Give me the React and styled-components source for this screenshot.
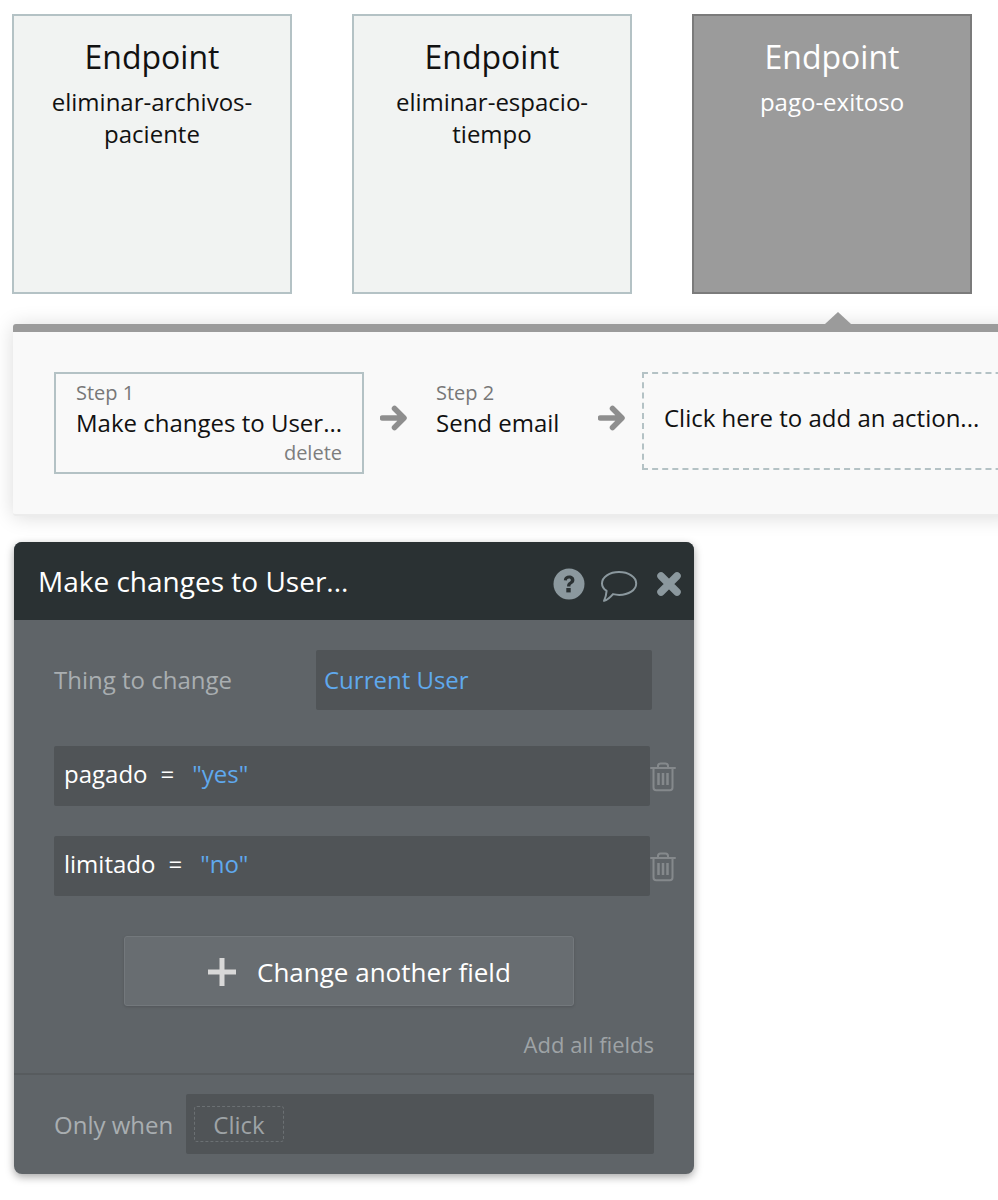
import React from "react";
import styled, { createGlobalStyle } from "styled-components";

const Global = createGlobalStyle`
  html, body { margin: 0; padding: 0; background: #fff; }
  body { font-family: "Open Sans", "Liberation Sans", sans-serif; color: #111; }
  * { box-sizing: border-box; }
`;

const Page = styled.div`
  width: 998px;
  height: 1200px;
  overflow: hidden;
  padding: 14px 0 0 0;
`;

const Cards = styled.div`
  display: flex;
  gap: 60px;
  padding-left: 12px;
`;

const Card = styled.div`
  width: 280px;
  height: 280px;
  padding: 21px 16px 0;
  text-align: center;
  background: #${(p) => (p.$active ? "9b9b9b" : "f1f3f2")};
  border: 2px solid #${(p) => (p.$active ? "7b7b7b" : "b4c2c5")};
  color: ${(p) => (p.$active ? "#fff" : "#111")};
`;

const CardTitle = styled.div`
  font-size: 32px;
  line-height: 40px;
`;

const CardName = styled.div`
  font-size: 24px;
  line-height: 32px;
  margin-top: 9px;
`;

const Panel = styled.div`
  position: relative;
  margin: 30px 0 0 13px;
  width: 1000px;
  height: 192px;
  background: #f9f9f9;
  border-top: 8px solid #9b9b9b;
  border-bottom: 2px solid #ececec;
  border-radius: 3px 0 0 3px;
  box-shadow: 0 1px 20px rgba(0, 0, 0, 0.15);
  padding: 40px 0 0 41px;
  display: flex;
  align-items: flex-start;
`;

const Notch = styled.div`
  position: absolute;
  left: 812px;
  top: -20px;
  width: 0;
  height: 0;
  border-left: 13px solid transparent;
  border-right: 13px solid transparent;
  border-bottom: 12px solid #9b9b9b;
`;

const Step = styled.div`
  flex: none;
  width: ${(p) => (p.$selected ? "310px" : "176px")};
  height: 102px;
  padding: 6px 20px 0;
  border: 2px solid ${(p) => (p.$selected ? "#b4c2c5" : "transparent")};
  display: flex;
  flex-direction: column;
`;

const StepLabel = styled.div`
  font-size: 20px;
  line-height: 26px;
  color: #777;
`;

const StepName = styled.div`
  font-size: 24px;
  line-height: 34px;
  color: #111;
  white-space: nowrap;
`;

const StepDelete = styled.div`
  font-size: 20px;
  line-height: 24px;
  color: #7d7d7d;
  text-align: right;
  margin-top: 1px;
`;

const ArrowWrap = styled.div`
  flex: none;
  width: ${(p) => p.$w}px;
  height: 91px;
  padding-left: ${(p) => p.$pad}px;
  display: flex;
  align-items: center;
`;

const AddAction = styled.div`
  flex: none;
  width: 400px;
  height: 98px;
  border: 2px dashed #b4c2c5;
  padding: 0 20px 8px;
  display: flex;
  align-items: center;
  font-size: 24px;
  color: #111;
  white-space: nowrap;
`;

const Modal = styled.div`
  width: 680px;
  height: 632px;
  margin: 26px 0 0 14px;
  background: #5f6468;
  border-radius: 8px;
  box-shadow: 0 3px 8px rgba(0, 0, 0, 0.35);
  overflow: hidden;
  display: flex;
  flex-direction: column;
`;

const ModalHeader = styled.div`
  height: 78px;
  background: #2a3133;
  color: #fff;
  display: flex;
  align-items: center;
  padding: 0 12px 0 24px;
  font-size: 28px;
  flex: none;
`;

const HeaderTitle = styled.div`
  flex: 1;
`;

const HeaderIcons = styled.div`
  display: flex;
  align-items: center;
  padding-top: 6px;
`;

const Body = styled.div`
  flex: 1;
  padding: 30px 40px 0;
  display: flex;
  flex-direction: column;
`;

const ThingRow = styled.div`
  display: flex;
  align-items: center;
  height: 60px;
  margin-bottom: 36px;
`;

const Label = styled.div`
  width: 262px;
  font-size: 24px;
  padding-bottom: 2px;
  color: #a9aeb1;
`;

const Input = styled.div`
  flex: none;
  background: #505457;
  width: ${(p) => p.$w}px;
  height: 60px;
  padding: 0 ${(p) => p.$pad || 10}px ${(p) => p.$lift || 0}px;
  display: flex;
  align-items: center;
  font-size: 24px;
  color: #fff;
  border-radius: 2px;
  white-space: pre;
`;

const Blue = styled.span`
  color: #5fa9ee;
`;

const Equals = styled.span`
  margin: 0 18px 0 13px;
`;

const FieldRow = styled.div`
  display: flex;
  align-items: center;
  height: 60px;
  margin-bottom: 30px;
`;

const AddField = styled.div`
  width: 450px;
  height: 70px;
  margin: 10px 0 0 70px;
  background: #686d71;
  border: 1px solid #73787c;
  border-radius: 3px;
  box-shadow: 0 1px 3px rgba(0, 0, 0, 0.15);
  color: #fff;
  font-size: 26px;
  display: flex;
  align-items: center;
  padding: 2px 0 0 83px;
  gap: 21px;
`;

const AddAll = styled.div`
  margin: 23px 0 0 0;
  text-align: right;
  font-size: 22px;
  line-height: 30px;
  color: #9ea3a6;
`;

const Footer = styled.div`
  height: 101px;
  flex: none;
  border-top: 2px solid #575b5e;
  padding: 19px 40px 0;
  display: flex;
  align-items: flex-start;
`;

const FooterLabel = styled.div`
  width: 132px;
  height: 60px;
  display: flex;
  align-items: center;
  font-size: 24px;
  color: #a9aeb1;
  white-space: nowrap;
`;

const ClickBox = styled.div`
  width: 90px;
  height: 36px;
  border: 1px dashed #6b7073;
  border-radius: 3px;
  display: flex;
  align-items: center;
  justify-content: center;
  color: #9ea3a6;
  font-size: 24px;
  margin-left: -2px;
`;

const TrashIcon = styled.svg`
  flex: none;
  margin-top: 2px;
`;

const BubbleIcon = styled.svg`
  margin: 4px 0 0 15px;
`;

const CloseIcon = styled.svg`
  margin-left: 18px;
`;

const Arrow = () => (
  <svg width="28" height="28" viewBox="0 0 28 28" fill="none">
    <path d="M2.5 14H23M14.5 4.5L24 14L14.5 23.5" stroke="#8e8e8e" strokeWidth="5.5" strokeLinecap="round" strokeLinejoin="round" />
  </svg>
);

const Help = () => (
  <svg width="32" height="32" viewBox="0 0 32 32">
    <circle cx="16" cy="16" r="15.5" fill="#8b989e" />
    <path d="M10.8 12.2c.3-3 2.4-4.600 5.400-4.600 3 0 5.200 1.800 5.200 4.400 0 2-1 3-2.600 4-1.100.7-1.400 1.200-1.400 2.400h-3.300c0-2.200.6-3.200 2.300-4.300 1-.6 1.500-1.100 1.500-2 0-1-.8-1.600-1.900-1.600-1.200 0-2 .7-2.100 1.900z" fill="#2a3133" />
    <rect x="13.3" y="20" width="4.4" height="4.4" fill="#2a3133" />
  </svg>
);

const Bubble = () => (
  <BubbleIcon width="38" height="32" viewBox="0 0 38 32" fill="none">
    <path d="M19 2C9.500 2 2 7 2 13.500c0 3 1.800 5.600 4.600 7.400-.2 3-1.200 7-2.600 10 3.700-1 6.800-4.200 9-6.800 2 .5 4 .8 6.200.8 9.500 0 17-4.900 17-11.400S28.500 2 19 2z" stroke="#8b989e" strokeWidth="2" strokeLinejoin="round" />
  </BubbleIcon>
);

const Close = () => (
  <CloseIcon width="26" height="26" viewBox="0 0 26 26" fill="none">
    <path d="M5 5L21 21M21 5L5 21" stroke="#8b989e" strokeWidth="7.500" strokeLinecap="round" />
  </CloseIcon>
);

const Trash = () => (
  <TrashIcon width="26" height="30" viewBox="0 0 26 30" fill="none" stroke="#85898c" strokeWidth="2">
    <path d="M1 6h24M8 6V4c0-1.500 1-2.500 2.500-2.500h5C17 1.500 18 2.500 18 4v2M3.500 6v19.500c0 1.700 1 2.800 2.700 2.800h13.600c1.700 0 2.700-1.100 2.700-2.800V6" strokeLinecap="round" />
    <path d="M8.500 11v12M13 11v12M17.500 11v12" strokeWidth="2.500" />
  </TrashIcon>
);

const Plus = () => (
  <svg width="28" height="28" viewBox="0 0 28 28">
    <path d="M14 0v28M0 14h28" stroke="#d8d8d8" strokeWidth="5" />
  </svg>
);

export default function App() {
  return (
    <Page>
      <Global />
      <Cards>
        <Card>
          <CardTitle>Endpoint</CardTitle>
          <CardName>eliminar-archivos-paciente</CardName>
        </Card>
        <Card>
          <CardTitle>Endpoint</CardTitle>
          <CardName>eliminar-espacio-tiempo</CardName>
        </Card>
        <Card $active>
          <CardTitle>Endpoint</CardTitle>
          <CardName>pago-exitoso</CardName>
        </Card>
      </Cards>
      <Panel>
        <Notch />
        <Step $selected>
          <StepLabel>Step 1</StepLabel>
          <StepName>Make changes to User...</StepName>
          <StepDelete>delete</StepDelete>
        </Step>
        <ArrowWrap $w={50} $pad={16}><Arrow /></ArrowWrap>
        <Step>
          <StepLabel>Step 2</StepLabel>
          <StepName>Send email</StepName>
        </Step>
        <ArrowWrap $w={52} $pad={8}><Arrow /></ArrowWrap>
        <AddAction>Click here to add an action...</AddAction>
      </Panel>
      <Modal>
        <ModalHeader>
          <HeaderTitle>Make changes to User...</HeaderTitle>
          <HeaderIcons>
            <Help />
            <Bubble />
            <Close />
          </HeaderIcons>
        </ModalHeader>
        <Body>
          <ThingRow>
            <Label>Thing to change</Label>
            <Input $w={336} $pad={8} $lift={2}><Blue>Current User</Blue></Input>
          </ThingRow>
          <FieldRow>
            <Input $w={596} $lift={6}>pagado<Equals>=</Equals><Blue>"yes"</Blue></Input>
            <Trash />
          </FieldRow>
          <FieldRow>
            <Input $w={596} $lift={6}>limitado<Equals>=</Equals><Blue>"no"</Blue></Input>
            <Trash />
          </FieldRow>
          <AddField>
            <Plus />
            <span>Change another field</span>
          </AddField>
          <AddAll>Add all fields</AddAll>
        </Body>
        <Footer>
          <FooterLabel>Only when</FooterLabel>
          <Input $w={468}>
            <ClickBox>Click</ClickBox>
          </Input>
        </Footer>
      </Modal>
    </Page>
  );
}
